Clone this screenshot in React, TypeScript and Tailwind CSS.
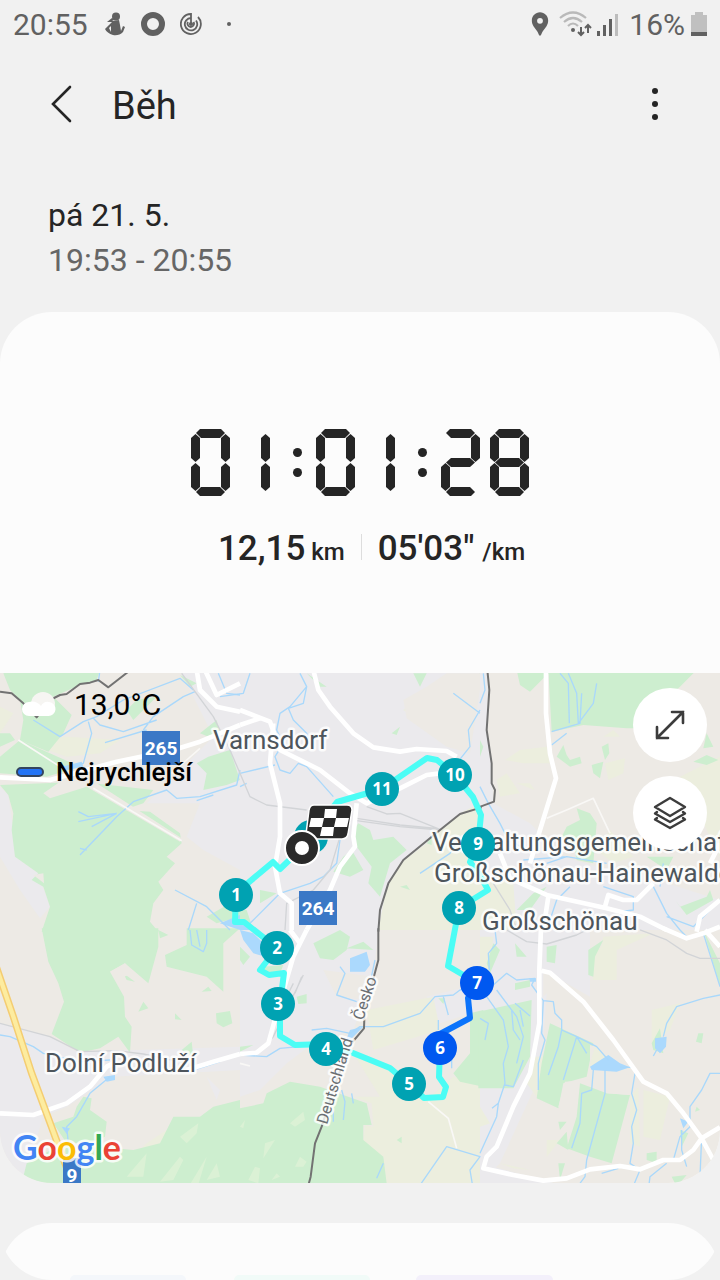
import React from "react";
import { MdLocationPin } from "react-icons/md";

// ---------- timer ----------

const SEGMENTS: Record<string, string> = {
  a: "col-start-2 col-end-5 row-start-1 row-end-3",
  b: "col-start-4 col-end-6 row-start-2 row-end-5",
  c: "col-start-4 col-end-6 row-start-6 row-end-9",
  d: "col-start-2 col-end-5 row-start-8 row-end-10",
  e: "col-start-1 col-end-3 row-start-6 row-end-9",
  f: "col-start-1 col-end-3 row-start-2 row-end-5",
  g: "col-start-2 col-end-5 row-start-4 row-end-7",
  // the digit 1 has its own pair of bars near the middle of the cell
  h: "col-start-3 col-end-4 row-start-2 row-end-5 w-[9px] justify-self-end",
  i: "col-start-3 col-end-4 row-start-6 row-end-9 w-[9px] justify-self-end",
};

const LIT: Record<string, string> = {
  "0": "abcdef",
  "1": "hi",
  "2": "abged",
  "8": "abcdefg",
};

const FLAT =
  "[clip-path:polygon(0_4px,4px_0,calc(100%-4px)_0,100%_4px,calc(100%-5px)_100%,5px_100%)]";
const FLAT_BOTTOM =
  "[clip-path:polygon(5px_0,calc(100%-5px)_0,100%_5px,calc(100%-4px)_100%,4px_100%,0_5px)]";
const FLAT_MIDDLE =
  "[clip-path:polygon(0_50%,5px_0,calc(100%-5px)_0,100%_50%,calc(100%-5px)_100%,5px_100%)]";
const UPRIGHT =
  "[clip-path:polygon(50%_0,100%_4px,100%_calc(100%-4px),50%_100%,0_calc(100%-4px),0_4px)]";

const segmentShape = (name: string) => {
  if (name === "a") return FLAT;
  if (name === "d") return FLAT_BOTTOM;
  if (name === "g") return FLAT_MIDDLE;
  return UPRIGHT;
};

const Digit = ({ value }: { value: string }) => (
  <div className="grid grid-cols-[5px_4px_21px_4px_5px] grid-rows-[5px_4px_20px_4px_1px_4px_20px_4px_5px]">
    {LIT[value].split("").map((s) => (
      <div key={s} className={`bg-[#252525] ${SEGMENTS[s]} ${segmentShape(s)}`} />
    ))}
  </div>
);

const Colon = () => (
  <div className="flex flex-col gap-[11px]">
    <div className="h-[9px] w-[9px] rounded-full bg-[#252525]" />
    <div className="h-[9px] w-[9px] rounded-full bg-[#252525]" />
  </div>
);

const Timer = ({ time }: { time: string }) => (
  <div role="timer" aria-label={time} className="flex items-center justify-center gap-[14px]">
    {time.split(":").map((pair, i) => (
      <React.Fragment key={i}>
        {i > 0 && <Colon />}
        <div className="flex gap-[10px]">
          <Digit value={pair[0]} />
          <Digit value={pair[1]} />
        </div>
      </React.Fragment>
    ))}
  </div>
);

// ---------- map ----------

type Tile = {
  x: number;
  y: number;
  town: string;
  farm: string;
  wood: string;
  land: string;
  clearing?: string;
  lake: string;
  stream: string;
  rail: string;
  lane: string;
  road: string;
  border: string;
};

// six tiles of 720 x 780 units
const TILES: Tile[] = [
  {
    x: 0,
    y: 0,
    town: "M0,350 25,375 40,480 45,560 115,610 150,710 120,745 60,660 0,560z M540,0 720,0 720,600 610,540 560,500 600,400 440,400 520,320 640,200z",
    farm: "M60,210 200,260 300,250 360,210 200,200z M0,110 40,130 0,190z",
    wood: "M0,345 130,340 170,338 280,340 460,360 430,400 370,420 450,425 540,490 545,520 500,560 525,580 475,635 490,660 460,700 450,755 475,785 125,785 150,710 130,650 95,630 115,610 45,560 35,480 40,430 25,375z M10,10 60,0 300,0 290,30 240,45 160,80 215,135 190,190 145,245 60,210 70,150 60,90 30,60z M0,190 30,190 45,210 0,230z M0,260 60,210 240,290 140,320 0,310z M600,190 650,150 660,190 625,200z M625,260 690,240 700,270 720,330 680,345 610,360 620,310 590,280z M540,15 590,40 570,50z M620,740 690,700 720,700 720,740 650,760z M410,90 470,80 400,150 380,120z",
    land: "M130,370 180,335 290,340 545,505 540,515 260,350 150,385z M100,615 130,610 132,640z",
    lake: "M185,290 245,275 250,290 200,300z M660,760 720,735 720,780z",
    stream:
      "M100,150 180,200 250,155 290,140 370,90 540,25 580,60 M265,155 275,190 250,280 190,300 M280,145 300,165 370,185 470,150 M430,180 460,140 550,80 585,65 M315,218 440,180 M240,555 350,440 400,395 500,360 530,385 600,380 710,345 720,300 M235,425 265,440 350,430 M235,455 350,430 M275,470 350,430 M240,535 260,540 M525,660 620,710 690,780 M590,700 565,780 M300,0 295,35 M655,10 680,70 720,75 M590,392 640,375",
    rail: "M545,10 640,140 690,240 720,310",
    lane: "M55,210 180,290 M515,310 560,270 600,235 M280,355 545,512",
    road: "M0,322 150,330 350,275 520,240 600,215 720,165 M590,0 600,60 650,110 720,125 M615,0 650,75 720,40",
    border: "M0,65 35,70 70,100 110,142 150,90 180,75 200,72 240,42 270,38 295,30 325,52 385,5",
  },
  {
    x: 720,
    y: 0,
    town: "M0,0 720,0 720,780 0,780z",
    farm: "M720,400 660,430 560,520 480,580 440,650 415,780 720,780z M490,120 560,60 620,90 560,170z",
    wood: "M520,10 560,10 540,50z M200,10 260,50 240,50z M455,190 480,170 470,195z M335,490 355,460 390,480 400,510 460,500 500,540 450,580 420,680 385,640 395,590 350,530z M310,560 335,540 370,600 330,620 280,605z M0,720 20,720 40,780 0,780z M60,660 110,670 60,700z M560,520 575,500 575,525z M480,650 500,645 510,660z M690,30 720,10 720,60z",
    land: "M490,90 560,50 620,10 720,10 720,60 690,250 620,230 500,145z",
    lake: "M0,760 40,780 0,780z",
    stream:
      "M30,10 10,70 -60,80 M180,10 200,50 150,110 120,130 110,180 130,220 105,260 120,300 150,310 175,280 200,290 280,380 M200,50 190,100 145,115 160,150 200,190 220,240 M0,310 105,285 M0,350 20,340 M30,760 120,670 210,640 250,620 290,580 300,510 M640,70 720,130 M720,120 685,180 690,230 650,280 M540,610 630,550 660,500 M0,680 20,660",
    rail: "M0,310 30,380 80,405 200,420 M350,445 480,465 590,475 M350,452 480,470 600,480 M380,410 440,432 480,430 600,478 M300,500 270,600 220,660 140,700 135,780",
    lane: "M240,300 300,350",
    road: "M220,0 235,60 270,110 340,190 400,232 480,245 530,237 620,243 650,260 M0,120 90,155 120,240 240,300 330,370 380,400 480,355 560,315 600,310 M100,160 90,280 120,400 120,500 105,590 120,670 155,700 155,780 M0,165 60,145 M350,400 340,500 345,530 300,590 270,660 200,780",
    border: "M725,412 660,432 600,480 490,570 445,640 420,720 415,785",
  },
  {
    x: 1440,
    y: 0,
    town: "M0,330 40,400 150,460 250,560 350,590 480,610 560,640 720,690 720,780 100,780 100,620 0,600z M0,0 25,0 20,180 35,280 40,400 0,400z",
    farm: "M75,270 120,240 200,230 210,280 130,280z M50,330 80,310 120,370 60,380z M110,340 150,340 165,360z M375,280 435,265 430,310 385,330z M600,320 720,260 720,560 690,500 660,440z M540,100 640,20 600,50z M390,480 460,560 400,580 350,540z M0,620 100,640 110,780 0,780z M370,200 400,180 420,200z",
    wood: "M205,0 650,0 600,50 540,100 500,175 440,175 310,165 215,185z M110,0 215,0 150,65 120,45z M230,260 250,225 260,255 270,270 300,260 305,280 270,290z M365,230 385,220 388,250 375,270z M335,285 370,275 360,325 340,310z M290,415 330,430 350,460 340,580 290,570 280,520 245,500 260,470 300,450z M640,275 680,255 715,270 680,285z M680,190 700,230 670,235z M585,690 600,710 680,680 690,660 700,690 620,735z M500,560 580,560 560,600z M110,720 160,670 200,650 150,720z M0,210 10,230 0,260z",
    land: "",
    lake: "",
    stream:
      "M240,10 265,40 268,160 M265,10 290,70 295,160 340,100 350,40 M305,70 300,160 215,185 M0,350 25,400 60,460 75,490 130,540 M260,190 215,225 M200,580 260,560 380,580 M370,650 460,680 460,720 420,725 M520,650 560,730 600,780 M550,580 540,650 M200,780 230,690 270,650 M720,690 640,770 560,740 M10,10 15,60 0,100 M130,570 260,560",
    rail: "M40,640 90,720 110,780",
    lane: "M200,445 260,420 340,385 390,490",
    road: "M198,0 198,130 210,250 228,325 180,480 150,580 M60,550 90,625 200,675 380,715 480,740 560,780 M205,680 190,780 M375,710 385,675 430,690 470,690 520,640 M720,520 690,580 M720,690 660,740 650,785",
    border: "M22,0 28,60 20,180 35,280 35,340 45,360 42,395 -5,412",
  },
  {
    x: 0,
    y: 780,
    town: "M0,280 150,320 230,365 720,350 720,420 340,440 200,530 130,560 0,550z M0,540 130,560 60,780 0,780z M620,440 660,480 650,510z",
    farm: "M80,700 100,690 100,740z M440,640 500,600 480,660 400,680z",
    wood: "M125,-5 475,-5 475,50 445,160 375,100 330,125 372,200 375,260 395,290 390,368 355,320 300,355 240,368 155,312 192,215 175,160 145,95z M475,0 505,15 480,25z M495,75 560,45 560,-5 720,-5 670,40 670,185 620,140 500,110z M370,130 405,155 380,150z M415,245 430,215 445,235z M525,250 545,270 525,268z M605,185 625,170 635,183z M648,250 690,243 697,280 670,292 650,280z M545,360 575,335 580,380z M230,530 250,500 275,505 270,540 320,575 315,620 270,640 200,640 160,580 220,560z M60,780 80,700 190,640 400,660 480,640 520,560 600,560 640,530 720,510 720,780z",
    land: "M330,125 375,100 400,130 372,140z",
    clearing:
      "M540,620 595,580 590,610 560,640z M480,755 540,680 550,690 520,750z M380,740 440,670 430,740z M620,750 650,700 660,740z M560,780 620,680 590,780z",
    lake: "M310,440 345,435 345,450 320,455z M185,590 210,595 200,612z",
    stream:
      "M0,315 30,320 100,350 130,370 240,395 330,390 M330,440 270,490 230,560 200,590 205,640 M570,0 575,45 610,65 620,40 620,0 M590,0 600,50 M580,420 660,395",
    rail: "M0,280 150,320 240,365 350,362 430,372 560,400",
    lane: "",
    road: "M0,550 100,555 200,520 270,470 320,410 350,395 M560,420 640,395 720,372",
    border: "",
  },
  {
    x: 720,
    y: 780,
    town: "M0,0 415,0 400,140 340,300 220,340 140,400 60,480 0,500z M560,200 720,160 720,240 600,280z",
    farm: "M380,240 580,200 600,300 400,360z M340,370 470,430 560,510 640,440 720,470 720,780 440,780 430,680 370,640 375,585 400,590 395,520 340,500 420,500z",
    wood: "M0,535 70,520 80,490 150,455 240,470 380,520 395,585 370,585 370,630 430,680 440,760 420,780 0,780z M220,40 300,0 330,20 320,60 280,90 240,85z M170,200 200,192 200,220 175,222z M640,430 690,370 690,250 730,240 730,470 660,455z M320,55 370,35 400,60z M470,630 485,620 485,640z M0,350 40,345 0,365z M0,50 30,80 10,105 0,90z M70,110 130,105 120,130 60,125z M595,205 615,205 610,222z",
    land: "M250,120 400,140 380,210 290,200z",
    clearing:
      "M150,580 190,545 195,570 165,590z M75,640 105,630 70,685z M25,750 45,710 60,715 55,760z M165,710 180,680 200,695 190,710z M0,590 15,570 10,595z M95,750 110,730 120,740z",
    lake: "M330,85 380,65 390,105 375,125 330,125z M0,0 40,10 70,40 75,80 40,70 10,30z M310,350 370,290 330,300z",
    stream:
      "M300,110 315,130 290,195 350,215 M215,300 260,295 330,310 360,290 430,290 540,250 585,200 640,195 660,180 720,170 M0,375 80,380 120,355 230,345 310,340 M610,200 625,255 M530,780 620,650 720,680 690,720 700,780 M405,90 390,160 M305,480 315,515 310,570 M335,490 340,520 M430,700 410,745 M280,540 280,575 M595,270 595,300 M635,380 635,415",
    rail: "M160,160 120,240 M190,135 100,320 60,360 M185,140 165,190",
    lane: "M565,515 625,565 650,655 M0,400 30,408",
    road: "M200,0 160,80 110,250 85,340 50,368 0,372 M150,0 180,40",
    border: "M415,-5 415,90 395,165 375,210 372,295 330,345 290,450 245,590 225,640 212,740 200,785",
  },
  {
    x: 1440,
    y: 780,
    town: "M0,0 330,0 330,200 190,120 190,300 170,460 60,700 0,760z M0,700 300,780 0,780z M200,190 190,330 170,470 190,200z",
    farm: "M0,20 40,20 30,120 0,120z M345,150 370,20 520,10 410,60 410,145z M515,240 600,220 570,300 515,340z M490,480 570,500 540,630 490,620z M450,500 475,470 480,650 450,640z M200,630 240,630 200,680z M150,380 190,380 170,500 140,460z M330,60 410,40 410,150 340,150z M60,700 150,720 100,715z M0,530 30,580 0,590z M340,345 380,380 330,410z",
    wood: "M-5,245 155,210 150,380 100,475 -5,475z M210,280 340,340 320,440 250,460 235,535 170,505 185,400z M300,460 380,490 450,495 395,700 330,680 260,655 290,560z M230,640 260,605 265,660z M325,60 370,30 345,80 340,140 325,135z M200,50 230,45 225,100 200,95z M105,40 140,80 110,80z M105,160 150,150 150,170 105,180z M515,340 540,295 550,370 520,360z M655,310 670,310 665,340 648,335z M500,670 530,665 530,700 500,690z M235,575 260,575 240,600z M40,40 60,60 30,130 20,100z M670,0 720,100 720,170z M650,530 660,540 645,545z M235,700 255,700 240,750z M600,600 625,610 605,650z M575,740 620,735 590,770z M670,620 700,690 680,660z",
    land: "M255,455 295,452 270,560 235,530z M385,440 465,430 450,495 380,490z M330,345 345,350 330,400z",
    lake: "M330,410 385,375 420,400 450,412 410,425 335,420z M525,325 560,320 558,350 540,370 525,355z M600,565 625,575 610,595z M148,145 168,145 168,155 150,155z",
    stream:
      "M45,0 50,40 25,70 28,120 M0,165 40,165 80,130 110,150 165,145 155,165 180,200 190,212 220,215 225,250 245,270 245,300 290,320 350,350 385,390 M20,200 70,270 85,350 70,400 75,460 55,520 50,560 0,670 M50,180 110,260 130,320 110,400 M95,240 100,300 120,330 M105,220 150,258 M120,240 130,290 M245,300 235,350 205,435 M290,320 250,450 M290,320 320,370 M190,210 185,310 195,330 175,400 175,480 M340,420 335,480 305,490 300,580 275,655 M375,420 375,490 320,690 315,740 300,760 M465,430 455,490 470,540 455,590 460,640 450,700 480,720 455,780 M720,195 670,205 590,230 560,280 550,320 M720,430 690,430 665,480 630,530 630,590 600,620 580,690 M605,600 605,660 620,710 M505,780 510,740 560,700 M420,412 455,412 M670,10 720,170 M665,620 660,740 M0,265 25,280 15,330 M130,390 100,470 75,465 M36,535 55,520 M530,360 520,378 M365,730 415,715 M600,0 620,20",
    rail: "M80,0 140,35 200,42 290,15 320,0 M480,0 560,30 620,70 660,85 720,85",
    lane: "",
    road: "M183,-5 178,120 178,280 150,430 100,530 50,650 20,680 10,715 100,735 190,752 260,745 330,718 420,708 480,718 550,690 600,690 640,660 665,625 720,592 M185,122 210,128 310,215 400,330 490,455 560,490 610,550 665,625 700,690 M550,-5 620,25 670,10 720,-10 M675,0 720,50",
    border: "",
  },
];

const FILLS: [keyof Tile, string][] = [
  ["town", "fill-[#ebeaed]"],
  ["farm", "fill-[#eceede]"],
  ["wood", "fill-[#cdeecf]"],
  ["land", "fill-[#edeae5]"],
  ["clearing", "fill-[#dbf1d5]"],
  ["lake", "fill-[#abd9fd]"],
];

const STROKES: [keyof Tile, string][] = [
  ["stream", "stroke-[#a9d8fb] stroke-[4px]"],
  ["rail", "stroke-[#d2d4d7] stroke-[4px]"],
  ["lane", "stroke-[#f9f8f6] stroke-[5px]"],
  ["road", "stroke-white stroke-[14px]"],
  ["border", "stroke-[#727272] stroke-[6px]"],
];

const KM_MARKS = [
  { n: 1, x: 236, y: 895 },
  { n: 2, x: 277, y: 948 },
  { n: 3, x: 278, y: 1004 },
  { n: 4, x: 326, y: 1049 },
  { n: 5, x: 409, y: 1084 },
  { n: 6, x: 440, y: 1048, fast: true },
  { n: 7, x: 477, y: 983, fast: true },
  { n: 8, x: 459, y: 908 },
  { n: 9, x: 478, y: 844 },
  { n: 10, x: 455, y: 775 },
  { n: 11, x: 382, y: 789 },
];

const PLACES = [
  { name: "Varnsdorf", x: 213, y: 749 },
  { name: "Verwaltungsgemeinschaft", x: 432, y: 851 },
  { name: "Großschönau-Hainewalde", x: 434, y: 882 },
  { name: "Großschönau", x: 482, y: 930 },
  { name: "Dolní Podluží", x: 45, y: 1072 },
];

const SHIELDS = [
  { n: "265", x: 142, y: 731, w: 38 },
  { n: "264", x: 299, y: 891, w: 38 },
  { n: "9", x: 63, y: 1158, w: 18 },
];

const HALO = "stroke-white/80 stroke-[5px] [paint-order:stroke] [stroke-linejoin:round]";

const RouteMap = () => (
  <svg
    viewBox="0 673 720 510"
    preserveAspectRatio="xMidYMid slice"
    className="block h-[510px] w-full bg-[#edeae5]"
  >
    <g transform="translate(0 670) scale(.33333)">
      {FILLS.map(([layer, cls]) =>
        TILES.map((t) => (
          <path
            key={layer + t.x + t.y}
            d={String(t[layer] ?? "")}
            transform={`translate(${t.x} ${t.y})`}
            className={cls}
          />
        ))
      )}
      {STROKES.map(([layer, cls]) =>
        TILES.map((t) => (
          <path
            key={layer + t.x + t.y}
            d={String(t[layer])}
            transform={`translate(${t.x} ${t.y})`}
            fill="none"
            strokeLinejoin="round"
            className={cls}
          />
        ))
      )}
      <path d="M-15,880 40,1040 95,1210 210,1520" fill="none" stroke="#f4cd72" strokeWidth="22" />
      <path d="M-15,880 40,1040 95,1210 210,1520" fill="none" stroke="#fdec9f" strokeWidth="13" />
    </g>

    {SHIELDS.map((s) => (
      <g key={s.n}>
        <rect x={s.x} y={s.y} width={s.w} height="34" fill="#3b78c6" />
        <text
          x={s.x + s.w / 2}
          y={s.y + 24}
          textAnchor="middle"
          className="fill-white text-[19px] font-bold"
        >
          {s.n}
        </text>
      </g>
    ))}

    {/* route */}
    <g fill="none" strokeWidth="6" strokeLinejoin="round">
      <path
        stroke="#4bfdf5"
        d="M302,848 280,869 273,862 236,893 235,922 244,922 277,948 260,970 269,975 284,973 280,1004 280,1036 295,1045 326,1044 353,1053 390,1068 409,1084 424,1098 443,1097 446,1087 439,1077 440,1048"
      />
      <path stroke="#0b73fb" d="M440,1048 440,1034 470,1018 468,998 477,983" />
      <path
        stroke="#4bfdf5"
        d="M477,983 448,966 459,908 488,890 480,875 470,862 478,844 481,815 473,797 455,775 437,760 427,758 382,789 337,802 311,835"
      />
    </g>

    {PLACES.map((p) => (
      <text key={p.name} x={p.x} y={p.y} className={`fill-[#4d555c] text-[26px] ${HALO}`}>
        {p.name}
      </text>
    ))}
    <text
      transform="translate(363 1021) rotate(-72)"
      className={`fill-[#6b6f73] text-[16px] ${HALO}`}
    >
      Česko
    </text>
    <text
      transform="translate(327 1125) rotate(-73)"
      className={`fill-[#6b6f73] text-[16px] ${HALO}`}
    >
      Deutschland
    </text>

    <circle cx="311" cy="837" r="17" fill="#00a2b2" />
    {KM_MARKS.map((m) => (
      <g key={m.n}>
        <circle cx={m.x} cy={m.y} r="17" fill={m.fast ? "#0058f0" : "#00a2b2"} />
        <text
          x={m.x}
          y={m.y + 6}
          textAnchor="middle"
          className="fill-white font-['Open_Sans',sans-serif] text-[17px] font-bold"
        >
          {m.n}
        </text>
      </g>
    ))}

    {/* finish flag */}
    <path
      d="M314,805H347Q352,805 352,810L348,834Q347,839 342,839H310Q305,839 306,834L309,810Q310,805 314,805z"
      fill="#2a2a2a"
      stroke="#fff"
      strokeWidth="1.5"
    />
    <path
      d="M325,809H337L336,818H324z M311,818H324L322,827H309z M336,818H349L347,827H334z M322,827H334L333,836H320z"
      fill="#fff"
    />
    {/* start */}
    <circle cx="302" cy="848" r="17" fill="#2a2a2a" stroke="#fff" strokeWidth="2" />
    <circle cx="302" cy="848" r="7" fill="#fff" />

    <text
      x="13"
      y="1160"
      className={`font-['Lato',sans-serif] text-[34px] font-bold ${HALO}`}
    >
      <tspan fill="#4285f4">G</tspan>
      <tspan fill="#ea4335">o</tspan>
      <tspan fill="#fbbc05">o</tspan>
      <tspan fill="#4285f4">g</tspan>
      <tspan fill="#34a853">l</tspan>
      <tspan fill="#ea4335">e</tspan>
    </text>
  </svg>
);

const MapPanel = () => (
  <div className="relative">
    <RouteMap />
    <div className="absolute left-4 top-[15px] text-black">
      <div className="flex h-8 items-center text-[30px]">
        <svg width="46" height="26" viewBox="0 0 46 26" className="mr-3">
          <circle cx="27" cy="13" r="12" fill="#f6f5f2" />
          <path d="M13,11a7,7 0 1 0 0,14H32a7,7 0 0 0 1,-14q-5,-1 -8,4q-5,-6 -12,-4z" fill="#fff" />
        </svg>
        13,0°C
      </div>
      <div className="mt-9 flex h-8 items-center gap-3 text-[26px] font-medium">
        <div className="h-[10px] w-7 rounded-full border-2 border-[#33445f] bg-[#2474f5]" />
        Nejrychlejší
      </div>
    </div>
    <div className="absolute right-[13px] top-[15px] flex flex-col gap-[14px]">
      <button
        aria-label="Zvětšit mapu"
        className="flex h-[74px] w-[74px] items-center justify-center rounded-full bg-white"
      >
        <svg width="32" height="32" viewBox="0 0 32 32" fill="none" stroke="#3c3c3c" strokeWidth="2.6">
          <path d="M3,29 29,3M18,3H29V14M3,18V29H14" strokeLinecap="round" />
        </svg>
      </button>
      <button
        aria-label="Vrstvy mapy"
        className="flex h-[74px] w-[74px] items-center justify-center rounded-full bg-white"
      >
        <svg
          width="34"
          height="34"
          viewBox="0 0 34 34"
          fill="none"
          stroke="#3c3c3c"
          strokeWidth="2.4"
          strokeLinejoin="round"
          strokeLinecap="round"
        >
          <path d="M17,2 32,11 17,20 2,11zM4,16 2,17.5 17,26 32,17.5 30,16M4,22 2,23.5 17,32 32,23.5 30,22" />
        </svg>
      </button>
    </div>
  </div>
);

// ---------- header ----------

const StatusBar = () => (
  <div className="flex h-12 items-center justify-between pl-[13px] pr-3 text-[30px] text-[#616161]">
    <div className="flex items-center">
      <span>20:55</span>
      <svg width="20" height="24" viewBox="0 0 20 24" className="ml-[17px]" fill="#616161">
        <circle cx="11" cy="4.5" r="4" />
        <path d="M7,9 14,8 15,13 16,19 18,14 20,15 18,20Q14,24 8,23Q2,21 0,17L4,13 7,10 2,10 7,6 10,7z" />
        <path d="M4,16 6,14 6,20z" fill="#f1f1f1" />
      </svg>
      <svg width="24" height="24" viewBox="0 0 24 24" className="ml-4">
        <circle cx="12" cy="12" r="9" fill="none" stroke="#616161" strokeWidth="6" />
      </svg>
      <svg
        width="22"
        height="22"
        viewBox="0 0 22 22"
        className="ml-[15px]"
        fill="none"
        stroke="#616161"
        strokeWidth="1.8"
      >
        <path d="M11,11V1A10,10 0 1 0 18,4M11,5A6.2,6.2 0 1 0 16,7.5M8,9A3.2,3.2 0 1 0 13.5,9" />
        <circle cx="11" cy="11" r="1.2" fill="#616161" />
      </svg>
      <div className="ml-[25px] h-1 w-1 rounded-full bg-[#616161]" />
    </div>
    <div className="flex items-center">
      <MdLocationPin className="h-7 w-7" />
      <svg width="33" height="26" viewBox="0 0 33 26" fill="none" className="ml-[5px]">
        <path d="M1,7Q14,-4 27,7M5,11Q14,3 23,11M9,15Q14,10 19,15" stroke="#b9b9b9" strokeWidth="2.2" />
        <circle cx="14" cy="19" r="2" fill="#616161" />
        <path
          d="M22,16V23M19,21 22,24 25,21M29,22V15M26,17 29,14 32,17"
          stroke="#616161"
          strokeWidth="2"
        />
      </svg>
      <svg width="22" height="24" viewBox="0 0 22 24" className="ml-[5px]">
        <path d="M0,19H3V24H0zM6,13H9V24H6zM12,7H15V24H12z" fill="#616161" />
        <path d="M18,2H21V24H18z" fill="#bdbdbd" />
      </svg>
      <span className="ml-[10px]">16%</span>
      <svg width="16" height="24" viewBox="0 0 16 24" className="ml-[6px] mr-px">
        <path d="M4,0H12V3H16V20H0V3H4z" fill="#c0c0c0" />
        <path d="M0,20H16V24H0z" fill="#616161" />
      </svg>
    </div>
  </div>
);

const Header = () => (
  <header className="flex items-center px-[45px] pt-6">
    <button aria-label="Zpět" className="p-1">
      <svg width="26" height="38" viewBox="0 0 26 38" fill="none" stroke="#252525" strokeWidth="2.6">
        <path d="M21,2 4,19 21,36" strokeLinecap="round" />
      </svg>
    </button>
    <h1 className="ml-[33px] flex-1 pt-1 text-[38px] leading-[54px] text-[#252525]">Běh</h1>
    <button aria-label="Další možnosti" className="flex flex-col gap-[7px] p-4 pr-[17px]">
      <span className="h-[6px] w-[6px] rounded-full bg-[#252525]" />
      <span className="h-[6px] w-[6px] rounded-full bg-[#252525]" />
      <span className="h-[6px] w-[6px] rounded-full bg-[#252525]" />
    </button>
  </header>
);

const App = () => {
  return (
    <div className="bg-[#f1f1f1] font-[Roboto,sans-serif]">
      <StatusBar />
      <Header />
      <div className="px-12 pb-[29px] pt-[57px] text-[32px] leading-[45px]">
        <p className="text-[#252525]">pá 21. 5.</p>
        <p className="text-[#666666]">19:53 - 20:55</p>
      </div>

      <main className="overflow-hidden rounded-[52px] bg-[#fcfcfc]">
        <section className="pb-[101px] pt-[117px]">
          <Timer time="01:01:28" />
          <div className="mt-[30px] flex items-baseline justify-center pl-[27px] pr-1 text-[35px] font-medium leading-[46px] text-[#252525]">
            <span>12,15</span>
            <span className="ml-[6px] text-2xl">km</span>
            <span className="mx-4 h-[26px] w-px bg-[#dddddd]" />
            <span>05'03"</span>
            <span className="ml-2 text-2xl">/km</span>
          </div>
        </section>
        <MapPanel />
      </main>

      <section className="mt-10 overflow-hidden rounded-b-[52px]">
        <div className="flex h-[57px] items-end rounded-t-[52px] bg-[#fcfcfc] pl-[70px]">
          <div className="h-[5px] w-[116px] rounded-t-[16px] bg-[#f4f7fb]" />
          <div className="ml-12 h-[5px] w-[136px] rounded-t-[16px] bg-[#f1fbf8]" />
          <div className="ml-[46px] h-[5px] w-[137px] rounded-t-[16px] bg-[#f3f0fb]" />
        </div>
      </section>
    </div>
  );
};

export default App;
